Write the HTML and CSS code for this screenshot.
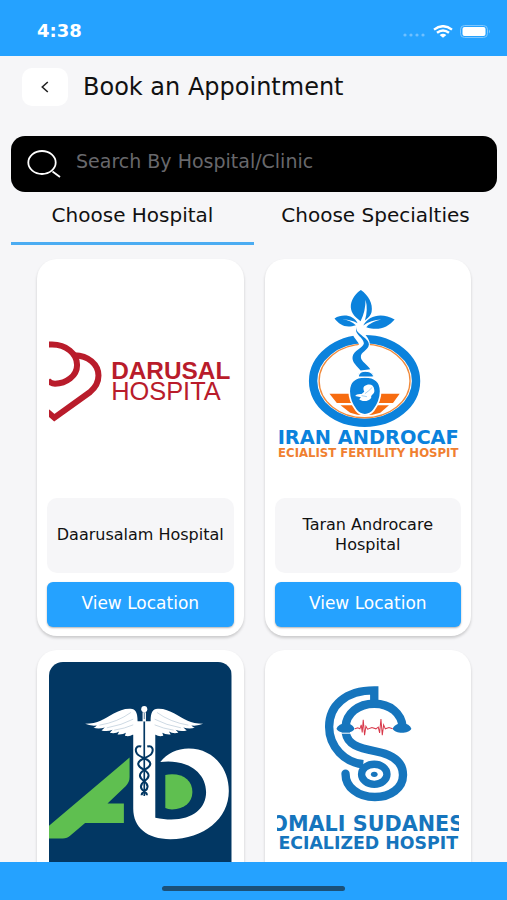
FILE: index.html
```html
<!DOCTYPE html>
<html lang="en">
<head>
<meta charset="utf-8">
<meta name="viewport" content="width=device-width, initial-scale=1">
<title>Book an Appointment</title>
<link rel="stylesheet" href="styles.css">
</head>
<body>
<div class="status-bar">
  <span class="time">4:38</span>
  <div class="status-icons">
    <svg class="dots" viewBox="0 0 24 6" aria-hidden="true"><g fill="#6fc0ff"><circle cx="3" cy="3" r="1.6"/><circle cx="9" cy="3" r="1.6"/><circle cx="15" cy="3" r="1.6"/><circle cx="21" cy="3" r="1.6"/></g></svg>
    <svg class="wifi" viewBox="0 0 20 13" aria-hidden="true"><g fill="none" stroke="#fff" stroke-width="2.4"><path d="M1 4.6Q10-2.2 19 4.6"/><path d="M4 7.8Q10 3 16 7.8"/></g><path d="M6.6 10Q10 7.400 13.400 10L10 12.800Z" fill="#fff"/></svg>
    <svg class="battery" viewBox="0 0 31 13" aria-hidden="true"><rect x=".5" y=".5" width="27" height="12" rx="4" fill="none" stroke="#7dc6ff"/><rect x="2.500" y="2" width="23" height="9" rx="2" fill="#fff"/><path d="M29 4.500Q31 6.500 29 8.500Z" fill="#7dc6ff"/></svg>
  </div>
</div>
<main class="screen">
  <header class="page-header">
    <button class="back" type="button" aria-label="Back"><svg viewBox="0 0 8 12" aria-hidden="true"><path d="M6.800 1L1.300 6L6.800 11" fill="none" stroke="#222" stroke-width="1.600"/></svg></button>
    <h1>Book an Appointment</h1>
  </header>
  <div class="search">
    <svg viewBox="0 0 34 28" aria-hidden="true"><g fill="none" stroke="#fff" stroke-width="1.800"><ellipse cx="15" cy="12.500" rx="13.700" ry="11.500"/><path d="M25.500 21.500L33 27"/></g></svg>
    <input type="search" placeholder="Search By Hospital/Clinic" aria-label="Search By Hospital/Clinic">
  </div>
  <nav class="tabs">
    <button class="tab active" type="button">Choose Hospital</button>
    <button class="tab" type="button">Choose Specialties</button>
  </nav>
  <section class="cards">
    <article class="card">
      <svg class="logo" viewBox="57 63 546 648" aria-hidden="true">
        <g fill="none" stroke="#b91c2b" stroke-width="18">
          <path d="M50 283H66C108 283 141 310 141 344C141 377 108 400 75 400Q64 400 54 391"/>
          <path d="M133 315C174 316 205 342 205 376C205 397 196 412 180 425L73 502L52 484"/>
        </g>
        <text class="darusal-bold" x="243" y="387">DARUSAL</text>
        <text class="darusal-light" x="243" y="449">HOSPITA</text>
      </svg>
      <h2 class="name">Daarusalam Hospital</h2>
      <button class="location" type="button">View Location</button>
    </article>
    <article class="card">
      <svg class="logo" viewBox="51 63 546 648" aria-hidden="true">
        <ellipse cx="313" cy="392" rx="154" ry="125" fill="none" stroke="#0b82dc" stroke-width="25"/>
        <ellipse cx="313" cy="392" rx="136" ry="110" fill="none" stroke="#f08a3c" stroke-width="4"/>
        <path d="M208 430H418L398 458H230ZM241 465H386L360 487Q313 502 270 487Z" fill="#f76c10"/>
        <path d="M294 228C282 250 306 260 312 278C319 300 279 304 282 325C285 340 308 347 316 364" fill="none" stroke="#fff" stroke-width="32"/>
        <path d="M290 230C279 249 327 262 326 283C324 302 300 304 302 322C303 334 321 343 330 357L301 361C292 348 275 337 277 320C279 300 309 294 311 279C311 263 278 250 290 230Z" fill="#0b82dc"/>
        <path d="M302 120C324 135 339 161 334 186Q331 200 314 211Q324 179 316 149Q316 184 301 213C281 199 270 184 272 164C275 146 287 130 302 120Z" fill="#0b82dc"/>
        <path d="M223 205C248 190 280 195 292 219Q269 207 247 208Q271 210 287 225C257 235 239 225 223 205Z" fill="#0b82dc"/>
        <path d="M403 208C365 187 326 195 309 226Q332 209 363 208Q333 214 318 231C353 243 382 233 403 208Z" fill="#0b82dc"/>
        <path d="M267 423C267 396 284 380 314 380C344 380 361 396 361 423C361 447 350 467 340 480Q330 493 314 493Q298 493 288 480C278 467 267 447 267 423Z" fill="#0b82dc" stroke="#fff" stroke-width="5"/>
        <path d="M295 374Q300 363 315 363Q332 363 339 374V380H295Z" fill="#0b82dc" stroke="#fff" stroke-width="3"/>
        <path d="M312 408C326 398 341 403 342 418C345 431 330 433 333 442C327 453 306 456 297 447L302 441L285 437Q288 430 304 431L312 424Q307 414 312 408Z" fill="#fff"/>
        <path d="M314 430Q327 421 336 411M304 436L320 439" fill="none" stroke="#78b8e9" stroke-width="2"/>
        <text class="taran-name" x="324" y="581">IRAN ANDROCAF</text>
        <text class="taran-kind" x="324" y="620">ECIALIST FERTILITY HOSPIT</text>
      </svg>
      <h2 class="name">Taran Androcare Hospital</h2>
      <button class="location" type="button">View Location</button>
    </article>
    <article class="card">
      <svg class="logo rounded" viewBox="57 51 546 648" aria-hidden="true">
        <rect x="57" y="51" width="546" height="648" fill="#023763"/>
        <path d="M57 541L298 337V396Q298 410 287 422L232 474H281V533H165L121 570Q112 579 98 579H57Z" fill="#5fbf50"/>
        <path d="M309 250H375V517C470 537 527 498 527 440C527 380 468 340 390 350C410 325 440 310 475 310C545 310 595 365 595 437C595 520 520 581 420 581C350 581 309 545 309 490Z" fill="#fff"/>
        <path d="M405 389Q413 387 425 387C463 387 486 409 486 440C486 470 462 492 425 492Q413 492 405 488Z" fill="#5fbf50"/>
        <g fill="#fff">
          <path id="wing" d="M342 228H322C322 202 316 192 301 191C266 189 236 216 211 227Q193 236 165 236Q180 243 200 241Q195 246 190 248Q207 252 224 247L214 256Q232 260 247 254L239 263Q257 266 267 259L262 268Q279 269 287 263L284 272Q298 275 307 269L342 270Z"/>
          <use href="#wing" transform="matrix(-1 0 0 1 683 0)"/>
          <circle cx="342" cy="192" r="9"/><path d="M337 201H347V230H337Z"/>
        </g>
        <path d="M208 240Q262 231 302 202M230 248Q275 240 309 222M252 255Q284 250 309 239M474 240Q420 231 380 202M452 248Q407 240 373 222M430 255Q398 250 373 239" fill="none" stroke="#9db5c8" stroke-width="1.500"/>
        <path d="M342 229V452" stroke="#023763" stroke-width="5"/>
        <path d="M342 203V222" stroke="#023763" stroke-width="2"/>
        <path d="M333 304C318 299 313 313 320 325C329 339 362 340 360 357C357 373 329 373 329 391C330 406 352 407 352 424C352 438 334 437 334 450M351 304C366 299 371 313 364 325C355 339 322 340 324 357C327 373 355 373 355 391C354 406 332 407 332 424C332 438 350 437 350 450" fill="none" stroke="#023763" stroke-width="6"/>
      </svg>
    </article>
    <article class="card">
      <svg class="logo" viewBox="51 51 546 648" aria-hidden="true">
        <g fill="none" stroke="#1675bd" stroke-width="25">
          <path d="M342 178V136C255 136 207 182 207 245C207 306 255 352 309 357"/>
          <path d="M256 246C258 205 294 176 342 176C390 176 424 205 427 246"/>
          <path d="M257 264C262 297 293 308 345 318C400 328 428 350 428 389C428 428 391 455 344 455C292 455 256 425 256 385" stroke-linecap="round"/>
          <ellipse cx="342" cy="387" rx="38" ry="30" stroke-width="22"/>
        </g>
        <path d="M229 251C232 240 246 233 258 234C270 235 280 241 283 251C276 267 236 267 229 251ZM397 251C400 241 411 235 424 234C438 233 450 240 453 251C445 267 405 267 397 251Z" fill="#1675bd"/>
        <path d="M243 264H272" stroke="#fff" stroke-width="3"/>
        <ellipse cx="342" cy="387" rx="10" ry="8" fill="#1675bd"/>
        <path d="M284 251L293 248L299 251L303 239L306 262L309 224L313 270L317 243L322 252L335 247L347 251L354 246L358 263L362 222L366 270L370 239L375 251L386 247L397 251" fill="none" stroke="#d8394b" stroke-width="3"/>
        <text class="somali-name" x="321" y="558">OMALI SUDANES</text>
        <text class="somali-kind" x="324" y="612">ECIALIZED HOSPIT</text>
      </svg>
    </article>
  </section>
</main>
<footer class="home-bar"><span class="home-indicator"></span></footer>
</body>
</html>
```

FILE: styles.css
```css
* { box-sizing: border-box; }

body {
  margin: 0;
  height: 100vh;
  display: flex;
  flex-direction: column;
  overflow: hidden;
  background: #f6f6f8;
  color: #111;
  font-family: "DejaVu Sans", sans-serif;
}

button {
  font-family: inherit;
  color: inherit;
  border: 0;
  padding: 0;
}

.status-bar {
  flex: none;
  height: 56px;
  padding: 6px 16px 0 37px;
  display: flex;
  align-items: center;
  justify-content: space-between;
  background: #25a2ff;
}

.time {
  color: #fff;
  font: 700 18px/24px "DejaVu Sans", sans-serif;
}

.status-icons { display: flex; align-items: center; gap: 7px; }
.dots { width: 24px; height: 6px; margin-top: 8px; }
.wifi { width: 20px; height: 13px; }
.battery { width: 31px; height: 13px; }

.screen {
  flex: 1;
  min-height: 0;
  overflow: hidden;
}

.page-header {
  display: flex;
  align-items: center;
  gap: 15px;
  padding: 12px 22px 0;
}

.back {
  width: 46px;
  height: 38px;
  display: grid;
  place-items: center;
  border-radius: 10px;
  background: #fff;
}

.back svg { width: 8px; height: 12px; }

h1 {
  margin: 0;
  font-size: 24px;
  line-height: 32px;
  font-weight: 400;
}

.search {
  height: 56px;
  margin: 30px 10px 0 11px;
  padding: 0 16px;
  display: flex;
  align-items: center;
  gap: 15px;
  border-radius: 14px;
  background: #000;
}

.search svg { flex: none; width: 34px; height: 28px; }

.search input {
  flex: 1;
  min-width: 0;
  padding: 0 0 6px;
  border: 0;
  outline: 0;
  background: transparent;
  color: #fff;
  font: 400 19px/24px "DejaVu Sans", sans-serif;
}

.search input::placeholder { color: #68686c; opacity: 1; }

.tabs {
  display: grid;
  grid-template-columns: 1fr 1fr;
  margin: 0 10px 0 11px;
}

.tab {
  height: 53px;
  padding-bottom: 4px;
  border-bottom: 3px solid transparent;
  background: none;
  font-size: 20px;
  white-space: nowrap;
}

.tab.active { border-bottom-color: #4bacf2; }

.cards {
  display: grid;
  grid-template-columns: 1fr 1fr;
  gap: 14px 21px;
  padding: 14px 36px 14px 37px;
}

.card {
  display: flex;
  flex-direction: column;
  padding: 12px 10px 9px;
  border-radius: 20px;
  background: #fff;
  box-shadow: 0 2px 3px rgba(0, 0, 0, 0.18);
}

.logo {
  display: block;
  aspect-ratio: 546 / 648;
  margin: 0 2px 10px;
  overflow: hidden;
}

.logo.rounded { border-radius: 14px; }

.name {
  display: flex;
  align-items: center;
  justify-content: center;
  height: 75px;
  margin: 0 0 9px;
  padding: 0 8px;
  border-radius: 10px;
  background: #f6f6f8;
  font-size: 16px;
  line-height: 20px;
  font-weight: 400;
  text-align: center;
}

.location {
  height: 45px;
  padding-bottom: 3px;
  border-radius: 6px;
  background: #25a2ff;
  box-shadow: 0 1px 2px rgba(0, 0, 0, 0.3);
  color: #fff;
  font-size: 17px;
}

.darusal-bold { font: 700 73px "Liberation Sans", sans-serif; fill: #b91c2b; }
.darusal-light { font: 400 76px "Liberation Sans", sans-serif; fill: #b91c2b; }

.taran-name,
.taran-kind,
.somali-name,
.somali-kind { text-anchor: middle; }

.taran-name { font: 700 58px "DejaVu Sans", sans-serif; fill: #0b82dc; }
.taran-kind { font: 700 35px "DejaVu Sans", sans-serif; fill: #f08030; }
.somali-name { font: 700 62px "DejaVu Sans", sans-serif; fill: #1675bd; }
.somali-kind { font: 700 52px "DejaVu Sans", sans-serif; fill: #1675bd; }

.home-bar {
  flex: none;
  height: 38px;
  padding-top: 14px;
  display: flex;
  justify-content: center;
  align-items: center;
  background: #25a2ff;
}

.home-indicator {
  width: 36%;
  height: 5px;
  border-radius: 3px;
  background: #1b5078;
}
```
